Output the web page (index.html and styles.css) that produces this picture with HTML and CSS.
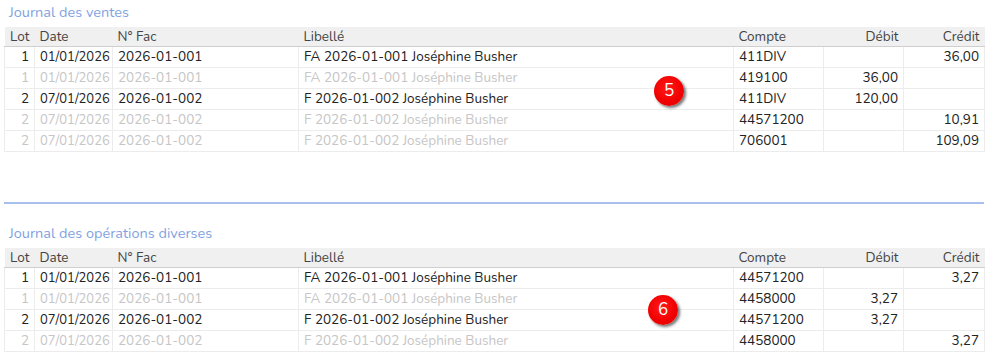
FILE: index.html
```html
<!DOCTYPE html>
<html lang="fr">
<head>
<meta charset="utf-8">
<link rel="stylesheet" href="styles.css">
</head>
<body>
<section class="journal">
  <h2 class="title">Journal des ventes</h2>
  <div class="wrap">
    <table class="grid">
      <colgroup><col class="c-lot"><col class="c-date"><col class="c-fac"><col class="c-lib"><col class="c-cpt"><col class="c-deb"><col class="c-cre"></colgroup>
      <thead><tr><th class="r">Lot</th><th class="d">Date</th><th>N° Fac</th><th>Libellé</th><th>Compte</th><th class="r">Débit</th><th class="r">Crédit</th></tr></thead>
      <tbody>
        <tr class="first"><td class="r">1</td><td class="d">01/01/2026</td><td>2026-01-001</td><td>FA 2026-01-001 Joséphine Busher</td><td>411DIV</td><td class="r"></td><td class="r">36,00</td></tr>
        <tr class="sub"><td class="r">1</td><td class="d">01/01/2026</td><td>2026-01-001</td><td>FA 2026-01-001 Joséphine Busher</td><td>419100</td><td class="r">36,00</td><td class="r"></td></tr>
        <tr class="first grp"><td class="r">2</td><td class="d">07/01/2026</td><td>2026-01-002</td><td>F 2026-01-002 Joséphine Busher</td><td>411DIV</td><td class="r">120,00</td><td class="r"></td></tr>
        <tr class="sub"><td class="r">2</td><td class="d">07/01/2026</td><td>2026-01-002</td><td>F 2026-01-002 Joséphine Busher</td><td>44571200</td><td class="r"></td><td class="r">10,91</td></tr>
        <tr class="sub"><td class="r">2</td><td class="d">07/01/2026</td><td>2026-01-002</td><td>F 2026-01-002 Joséphine Busher</td><td>706001</td><td class="r"></td><td class="r">109,09</td></tr>
      </tbody>
    </table>
    <span class="badge badge-5">5</span>
  </div>
</section>
<hr class="rule">
<section class="journal second">
  <h2 class="title">Journal des opérations diverses</h2>
  <div class="wrap">
    <table class="grid">
      <colgroup><col class="c-lot"><col class="c-date"><col class="c-fac"><col class="c-lib"><col class="c-cpt"><col class="c-deb"><col class="c-cre"></colgroup>
      <thead><tr><th class="r">Lot</th><th class="d">Date</th><th>N° Fac</th><th>Libellé</th><th>Compte</th><th class="r">Débit</th><th class="r">Crédit</th></tr></thead>
      <tbody>
        <tr class="first"><td class="r">1</td><td class="d">01/01/2026</td><td>2026-01-001</td><td>FA 2026-01-001 Joséphine Busher</td><td>44571200</td><td class="r"></td><td class="r">3,27</td></tr>
        <tr class="sub"><td class="r">1</td><td class="d">01/01/2026</td><td>2026-01-001</td><td>FA 2026-01-001 Joséphine Busher</td><td>4458000</td><td class="r">3,27</td><td class="r"></td></tr>
        <tr class="first grp"><td class="r">2</td><td class="d">07/01/2026</td><td>2026-01-002</td><td>F 2026-01-002 Joséphine Busher</td><td>44571200</td><td class="r">3,27</td><td class="r"></td></tr>
        <tr class="sub"><td class="r">2</td><td class="d">07/01/2026</td><td>2026-01-002</td><td>F 2026-01-002 Joséphine Busher</td><td>4458000</td><td class="r"></td><td class="r">3,27</td></tr>
      </tbody>
    </table>
    <span class="badge badge-6">6</span>
  </div>
</section>
</body>
</html>
```
FILE: styles.css
```css
html, body {
  margin: 0;
  padding: 0;
  background: #fff;
}
body {
  padding: 0 5px 0 4px;
  font-family: "Nunito", "Lato", "Open Sans", sans-serif;
  font-size: 13.5px;
  color: #222;
}
.title {
  margin: 0;
  padding: 3px 0 0 5px;
  height: 27px;
  box-sizing: border-box;
  font-size: 14.5px;
  font-weight: normal;
  color: #7fa2e2;
  line-height: 18px;
}
.wrap {
  position: relative;
}
.grid {
  width: 980px;
  border-collapse: collapse;
  table-layout: fixed;
}
.c-lot { width: 30px; }
.c-date { width: 78px; }
.c-fac { width: 186px; }
.c-lib { width: 435px; }
.c-cpt { width: 90px; }
.c-deb { width: 80px; }
.c-cre { width: 81px; }
.grid th {
  background: #f0f0f0;
  font-weight: normal;
  color: #444;
  text-align: left;
  height: 19px;
  padding: 0 5px;
  border-bottom: 1px solid #cfcfcf;
  line-height: 19px;
}
.grid td {
  height: 20px;
  padding: 0 5px;
  line-height: 20px;
  border: 1px solid #ececec;
  white-space: nowrap;
}
.grid td.d { padding: 0 0 0 5px; font-size: 13px; }
.grid th.r, .grid td.r { text-align: right; }
.grid tr.grp td { border-top: 1px solid #c8c8c8; }
.grid tr.sub td:nth-child(-n+4) { color: #c6c6c6; }
.grid tbody tr:first-child td { border-top: 1px solid #cfcfcf; }
.rule {
  margin: 50px 0 0;
  border: 0;
  height: 2px;
  background: #a9c0ec;
  width: 980px;
}
.second .title { padding-top: 20px; height: 44px; }
.badge {
  position: absolute;
  width: 30px;
  height: 30px;
  border-radius: 50%;
  background: radial-gradient(circle at 45% 40%, #ff1a1a 0%, #f00000 60%, #e00000 100%);
  color: #fff;
  font-size: 17px;
  line-height: 30px;
  text-align: center;
  box-shadow: 2px 2px 3px rgba(0,0,0,0.55);
}
.badge-5 { left: 650px; top: 49px; }
.badge-6 { left: 644px; top: 47px; }
```
